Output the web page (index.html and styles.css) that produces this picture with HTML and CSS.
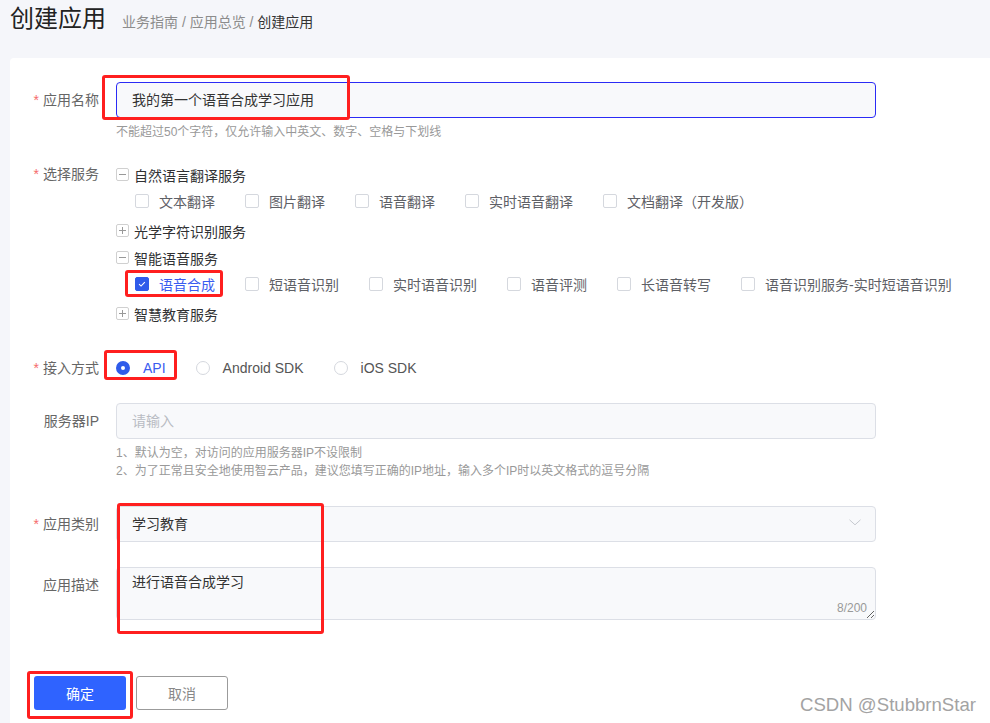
FILE: index.html
```html
<!DOCTYPE html>
<html lang="zh-CN">
<head>
<meta charset="utf-8">
<title>创建应用</title>
<link rel="stylesheet" href="styles.css">
</head>
<body>
<div class="page">
  <header class="head">
    <h1 class="title">创建应用</h1>
    <nav class="crumb"><span>业务指南</span> / <span>应用总览</span> / <span class="cur">创建应用</span></nav>
  </header>

  <main class="card">
    <div class="row">
      <div class="lbl req">应用名称</div>
      <div class="ctl">
        <div class="inp focus">我的第一个语音合成学习应用</div>
        <p class="hint">不能超过50个字符，仅允许输入中英文、数字、空格与下划线</p>
      </div>
    </div>

    <div class="row row-services">
      <div class="lbl lbl-tree req">选择服务</div>
      <div class="ctl tree">
        <div class="node">
          <svg class="toggle" viewBox="0 0 13 13"><rect x="0.5" y="0.5" width="12" height="12" rx="1.5" fill="#fff" stroke="#d0d0d0"/><path d="M3 6.5h7" stroke="#999" stroke-width="1"/></svg>
          <span>自然语言翻译服务</span>
        </div>
        <div class="leaves">
          <span class="chk"><span class="box"></span>文本翻译</span>
          <span class="chk"><span class="box"></span>图片翻译</span>
          <span class="chk"><span class="box"></span>语音翻译</span>
          <span class="chk"><span class="box"></span>实时语音翻译</span>
          <span class="chk"><span class="box"></span>文档翻译（开发版）</span>
        </div>
        <div class="node">
          <svg class="toggle" viewBox="0 0 13 13"><rect x="0.5" y="0.5" width="12" height="12" rx="1.5" fill="#fff" stroke="#d0d0d0"/><path d="M3 6.5h7M6.5 3v7" stroke="#999" stroke-width="1"/></svg>
          <span>光学字符识别服务</span>
        </div>
        <div class="node">
          <svg class="toggle" viewBox="0 0 13 13"><rect x="0.5" y="0.5" width="12" height="12" rx="1.5" fill="#fff" stroke="#d0d0d0"/><path d="M3 6.5h7" stroke="#999" stroke-width="1"/></svg>
          <span>智能语音服务</span>
        </div>
        <div class="leaves">
          <span class="chk on"><span class="box"><svg viewBox="0 0 14 14"><path d="M3.6 7.2l2.3 2.2 4.4-4.5" fill="none" stroke="#fff" stroke-width="1.3"/></svg></span>语音合成</span>
          <span class="chk"><span class="box"></span>短语音识别</span>
          <span class="chk"><span class="box"></span>实时语音识别</span>
          <span class="chk"><span class="box"></span>语音评测</span>
          <span class="chk"><span class="box"></span>长语音转写</span>
          <span class="chk"><span class="box"></span>语音识别服务-实时短语音识别</span>
        </div>
        <div class="node">
          <svg class="toggle" viewBox="0 0 13 13"><rect x="0.5" y="0.5" width="12" height="12" rx="1.5" fill="#fff" stroke="#d0d0d0"/><path d="M3 6.5h7M6.5 3v7" stroke="#999" stroke-width="1"/></svg>
          <span>智慧教育服务</span>
        </div>
      </div>
    </div>

    <div class="row row-access">
      <div class="lbl lbl-radio req">接入方式</div>
      <div class="ctl radios">
        <span class="radio on"><span class="dot"></span>API</span>
        <span class="radio"><span class="dot"></span>Android SDK</span>
        <span class="radio"><span class="dot"></span>iOS SDK</span>
      </div>
    </div>

    <div class="row row-ip">
      <div class="lbl">服务器IP</div>
      <div class="ctl">
        <div class="inp"><span class="ph">请输入</span></div>
        <p class="hint">1、默认为空，对访问的应用服务器IP不设限制<br>2、为了正常且安全地使用智云产品，建议您填写正确的IP地址，输入多个IP时以英文格式的逗号分隔</p>
      </div>
    </div>

    <div class="row row-cat">
      <div class="lbl req">应用类别</div>
      <div class="ctl">
        <div class="inp select"><span>学习教育</span><svg class="chev" viewBox="0 0 12 7"><path d="M0.5 0.8l5.5 5 5.5-5" fill="none" stroke="#c6c9cf" stroke-width="1"/></svg></div>
      </div>
    </div>

    <div class="row row-desc">
      <div class="lbl">应用描述</div>
      <div class="ctl area-wrap">
        <textarea class="area" readonly>进行语音合成学习</textarea>
        <span class="count">8/200</span>
      </div>
    </div>

    <div class="actions">
      <button class="btn primary" type="button">确定</button>
      <button class="btn ghost" type="button">取消</button>
    </div>
  </main>

  <div class="mark m-name"></div>
  <div class="mark m-tts"></div>
  <div class="mark m-api"></div>
  <div class="mark m-cat"></div>
  <div class="mark m-btn"></div>
  <div class="wm">CSDN @StubbrnStar</div>
</div>
</body>
</html>
```

FILE: styles.css
```css
* { box-sizing: border-box; }
html, body { margin: 0; padding: 0; }
body {
  width: 990px;
  height: 723px;
  overflow: hidden;
  background: #f5f6fa;
  font-family: "Liberation Sans", "Noto Sans CJK SC", sans-serif;
  font-size: 14px;
  color: #333;
}
.page {
  position: relative;
  height: 723px;
  padding-left: 10px;
  display: flex;
  flex-direction: column;
}
.head {
  height: 58px;
  flex: none;
  display: flex;
  align-items: baseline;
}
.title {
  margin: 0;
  font-size: 24px;
  font-weight: normal;
  line-height: 38px;
  color: #222;
}
.crumb {
  margin-left: 16px;
  font-size: 14px;
  color: #8c8c8c;
}
.crumb .cur { color: #333; }

.card {
  flex: 1;
  background: #fff;
  border-top-left-radius: 4px;
  padding-top: 24px;
}
.row {
  display: grid;
  grid-template-columns: 106px 760px;
  align-items: start;
}
.lbl {
  text-align: right;
  padding-right: 17px;
  color: #666;
  line-height: 36px;
  white-space: nowrap;
}
.req::before {
  content: "*";
  color: #f56c6c;
  margin-right: 4px;
}
.lbl-tree { line-height: 27px; }
.lbl-radio { line-height: 28px; }

.row-services { margin-top: 20px; }
.row-access { margin-top: 27px; }
.row-ip { margin-top: 21px; }
.row-cat { margin-top: 26px; }
.row-desc { margin-top: 25px; }

.inp {
  height: 36px;
  border: 1px solid #dcdfe6;
  border-radius: 4px;
  background: #f8f9fb;
  padding: 0 15px;
  line-height: 34px;
  color: #333;
}
.inp.focus { border-color: #2b2bf5; }
.ph { color: #b9bcc3; }
.select {
  display: flex;
  align-items: center;
  justify-content: space-between;
  padding-right: 14px;
}
.chev { width: 12px; height: 7px; margin-top: -3px; }

.hint {
  margin: 5px 0 0;
  font-size: 12px;
  line-height: 18px;
  color: #999;
}

.node {
  display: flex;
  align-items: center;
  gap: 5px;
  height: 27px;
  color: #303133;
}
.toggle { width: 13px; height: 13px; flex: none; }
.leaves {
  display: flex;
  align-items: center;
  height: 25px;
  padding-left: 19px;
  margin-bottom: 4px;
  width: max-content;
  white-space: nowrap;
}
.chk {
  display: flex;
  align-items: center;
  margin-right: 30px;
  color: #5e6066;
}
.box {
  width: 14px;
  height: 14px;
  flex: none;
  border: 1px solid #d5d8de;
  border-radius: 2px;
  background: #fff;
  margin-right: 10px;
  display: flex;
}
.box svg { width: 12px; height: 12px; }
.chk.on .box { background: #2f5bea; border-color: #2f5bea; }
.chk.on { color: #3a5cf0; }

.radios {
  display: flex;
  align-items: center;
  height: 28px;
}
.radio {
  display: flex;
  align-items: center;
  margin-right: 30px;
  color: #555;
}
.dot {
  width: 14px;
  height: 14px;
  flex: none;
  border-radius: 50%;
  border: 1px solid #d5d8de;
  background: #fff;
  margin-right: 13px;
}
.radio.on .dot { border: 5px solid #2f5bea; }
.radio.on { color: #3a5cf0; }

.area-wrap { position: relative; }
.area {
  display: block;
  width: 760px;
  height: 53px;
  border: 1px solid #dcdfe6;
  border-radius: 4px;
  background: #f8f9fb;
  padding: 4px 15px;
  font: inherit;
  line-height: 20px;
  color: #333;
  resize: vertical;
  outline: none;
}
.count {
  position: absolute;
  right: 9px;
  bottom: 5px;
  font-size: 12px;
  line-height: 14px;
  color: #999;
}

.actions {
  display: flex;
  gap: 10px;
  margin-top: 56px;
  padding-left: 24px;
}
.btn {
  width: 92px;
  height: 34px;
  border-radius: 3px;
  font: inherit;
  font-size: 14px;
  cursor: pointer;
}
.primary { background: #2f63ff; color: #fff; border: none; }
.ghost { background: #fff; color: #888; border: 1px solid #9b9b9b; }

.mark {
  position: absolute;
  border: 3px solid #ff1f1f;
  border-radius: 3px;
  pointer-events: none;
}
.m-name { left: 102px; top: 75px; width: 248px; height: 45px; }
.m-tts { left: 125px; top: 270px; width: 98px; height: 27px; }
.m-api { left: 104px; top: 350px; width: 73px; height: 30px; }
.m-cat { left: 117px; top: 503px; width: 207px; height: 131px; }
.m-btn { left: 27px; top: 671px; width: 106px; height: 48px; }
.wm {
  position: absolute;
  left: 800px;
  top: 694px;
  font-size: 18.6px;
  line-height: 22px;
  color: #a3a3a3;
  white-space: nowrap;
}
```
